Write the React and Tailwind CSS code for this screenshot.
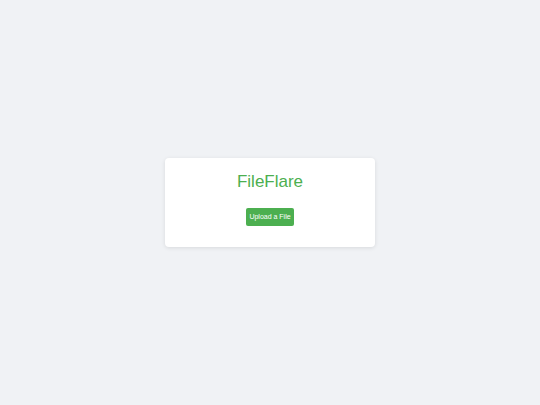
import React from 'react';

export default function App() {
  return (
    <div className="min-h-screen w-full bg-[#f0f2f5] flex items-center justify-center" style={{ fontFamily: '"Liberation Sans", Arial, sans-serif' }}>
      <div className="w-[210px] h-[89px] bg-white rounded-[4px] shadow-[0_1px_4px_rgba(0,0,0,0.1)] flex flex-col items-center pt-[14px]">
        <h1 className="text-[17px] leading-[20px] text-[#4caf50] font-normal">FileFlare</h1>
        <button className="mt-[16px] w-[48px] h-[18px] bg-[#4caf50] text-white text-[7px] rounded-[2px] flex items-center justify-center">
          Upload a File
        </button>
      </div>
    </div>
  );
}
